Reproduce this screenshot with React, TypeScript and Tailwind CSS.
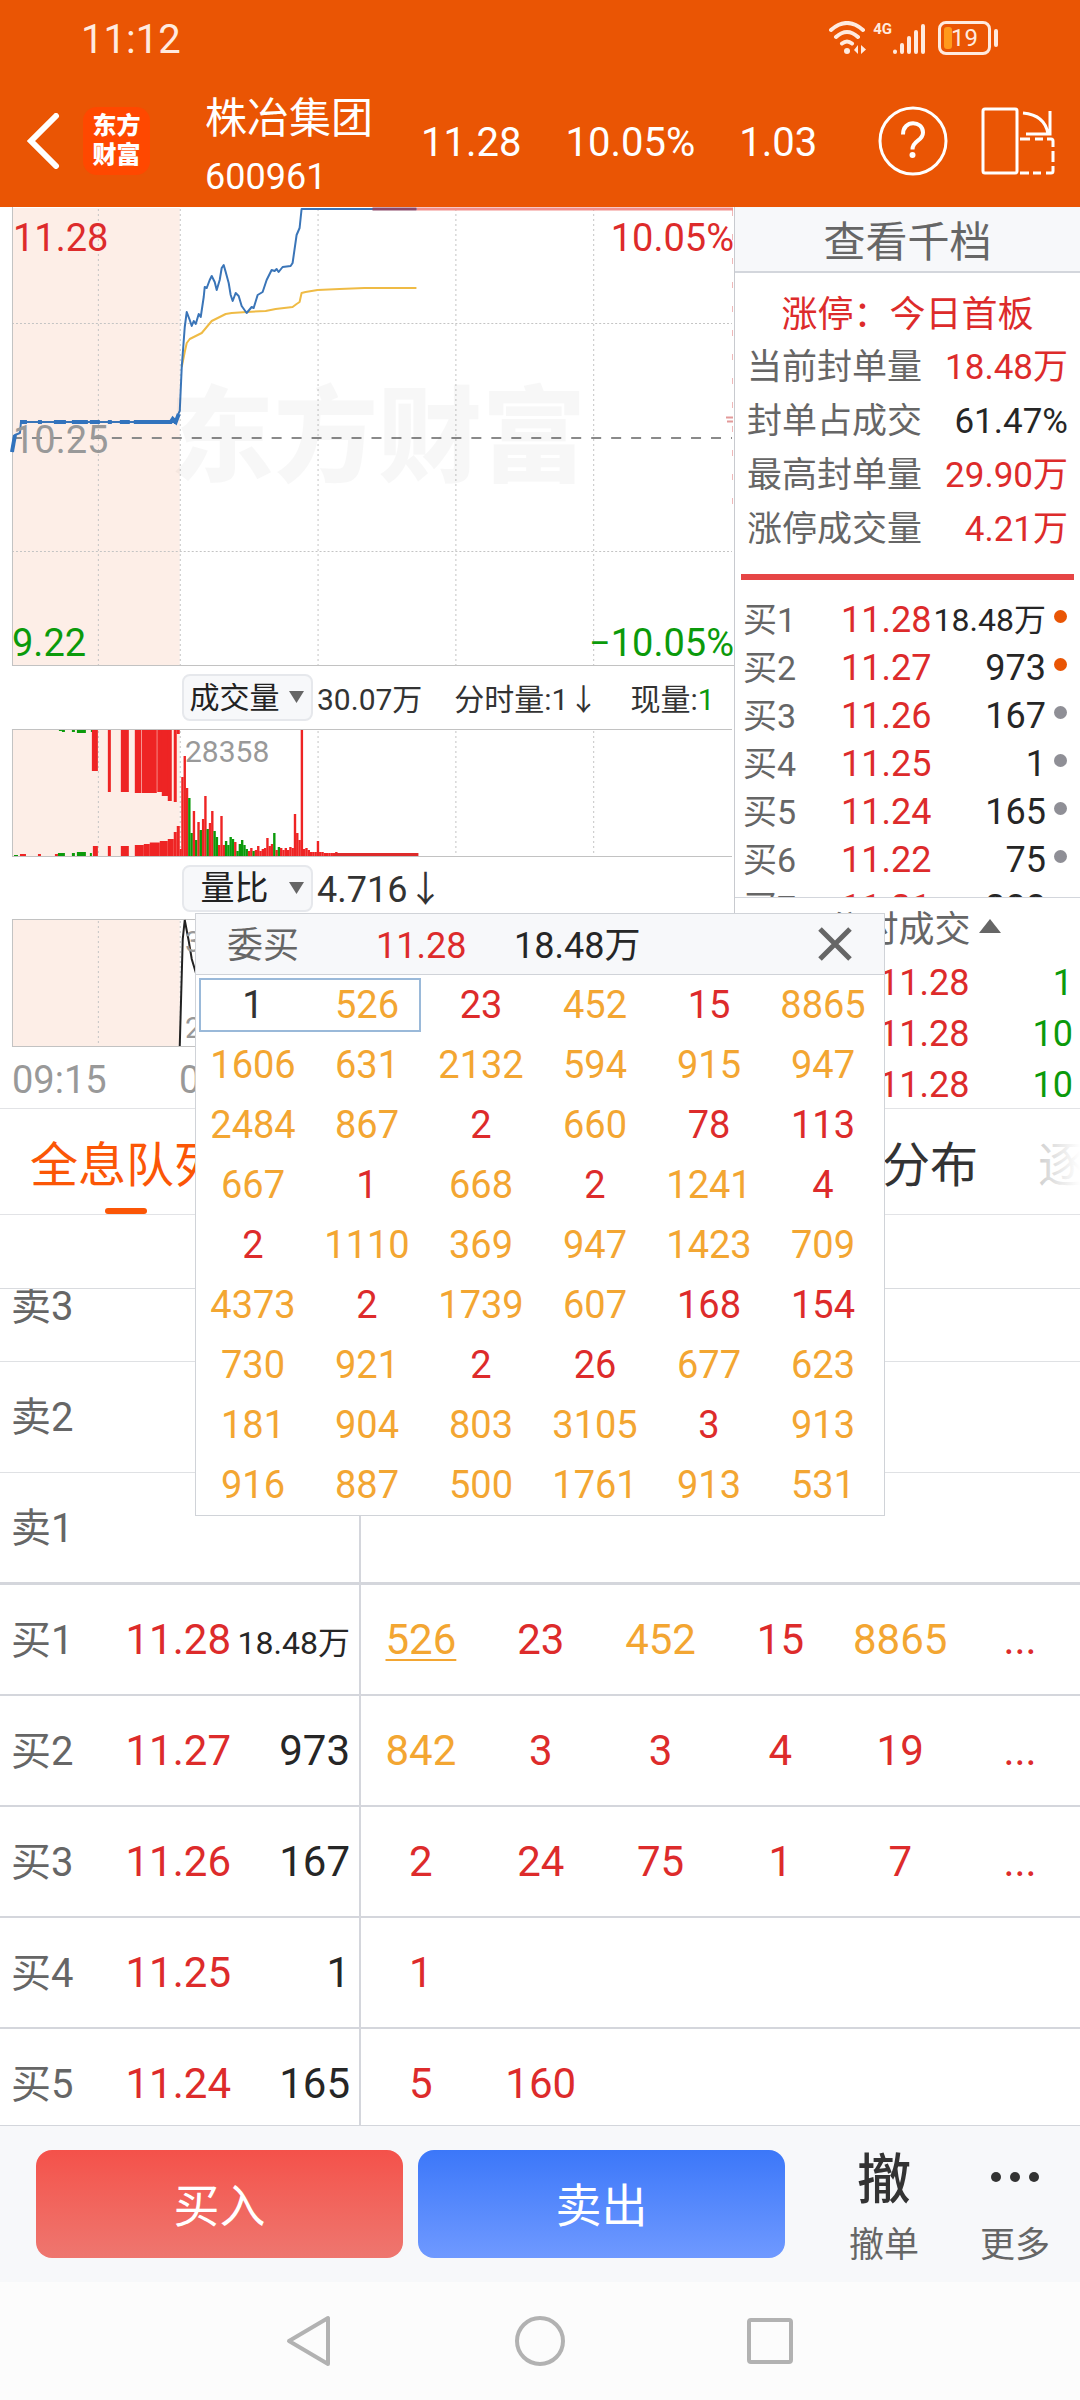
import React from "react";

type Bar = [x: number, width: number, height: number, green?: 1];

const PRICE =
  "12,245 15,228 20,226 21,215 170,215 173,212 175,216 177,211 179,206 180,204 182,160 185,120 187,105 190,113 192,119 194,114 196,117 199,107 201,110 204,90 205,80 207,81 210,73 212,69 215,75 217,83 220,73 222,61 224,58 226,65 229,76 231,88 233,94 236,86 239,89 242,99 247,106 252,100 254,101 258,88 263,85 267,73 272,63 275,64 277,62 279,65 283,60 291,59 293,56 297,28 300,21 302,2 417,2";
const AVERAGE =
  "182,160 185,145 187,136 190,132 196,129 202,126 207,120 212,114 220,110 226,107 232,106 247,105 266,104 276,102 293,100 297,97 300,95 302,86 306,85 318,83 340,82 365,81 417,81";

const TOP_BARS: Bar[] = [
  [12, 3, 1], [38, 3, 1], [59, 3, 2, 1], [62, 3, 3, 1], [72, 3, 3, 1], [77, 9, 4, 1], [91, 2, 3, 1],
  [92, 6, 42], [108, 3, 63], [121, 8, 63], [135, 6.5, 64], [142, 15, 64], [157.5, 5, 63],
  [162, 7, 67], [168, 4, 72], [174, 3, 73], [177, 3, 5],
];

const CALL_BARS: Bar[] = [
  [14, 4, 1, 1], [20, 6, 2], [38, 3, 2], [55, 3, 2], [58, 7, 3, 1], [72, 3, 3, 1], [77, 9, 4, 1],
  [90, 2, 3, 1], [93, 5, 10], [108, 3, 10], [121, 8, 10], [135, 9, 11], [144, 6, 12],
  [150, 10, 13.5], [160, 8, 15], [168, 6, 17], [174, 3, 24], [177, 3, 30], [180, 2, 7],
];

// Minute volumes after the open; negative values are falling minutes.
const MINUTES = [
  79, 100, 68, -58, -23, 45, -16, 34, -26, 37, 60, -27, 33, 45, -25, -19, 11, 40, 11, -15, -11, -19,
  -17, 14, -5, -12, -16, -11, -7, 5, 8, -5, 6, 10, 5, 7, 8, 18, 10, 12, -23, 6, -9, 8, 6, 8, 6, 9, 8,
  42, 23, 16, 126, 7, 8, 6, 4, 4, 4, 15, 4, 4, 3, 3, 3, 3, 3, 4,
];

const GRID_X = [98, 180, 318, 456, 594];

const QUEUE = [
  [526, 23, 452, 15, 8865],
  [1606, 631, 2132, 594, 915, 947],
  [2484, 867, 2, 660, 78, 113],
  [667, 1, 668, 2, 1241, 4],
  [2, 1110, 369, 947, 1423, 709],
  [4373, 2, 1739, 607, 168, 154],
  [730, 921, 2, 26, 677, 623],
  [181, 904, 803, 3105, 3, 913],
  [916, 887, 500, 1761, 913, 531],
];

const LIMIT_STATS = [
  ["当前封单量", "18.48万", true],
  ["封单占成交", "61.47%", false],
  ["最高封单量", "29.90万", true],
  ["涨停成交量", "4.21万", true],
] as const;

const BIDS = [
  ["买1", "11.28", "18.48万", "bg-[#e95504]"],
  ["买2", "11.27", "973", "bg-[#e95504]"],
  ["买3", "11.26", "167", "bg-[#8f8f96]"],
  ["买4", "11.25", "1", "bg-[#8f8f96]"],
  ["买5", "11.24", "165", "bg-[#8f8f96]"],
  ["买6", "11.22", "75", "bg-[#8f8f96]"],
  ["买7", "11.21", "288", "bg-[#f4c9a8]"],
];

const TRADES = [["11.28", "1"], ["11.28", "10"], ["11.28", "10"]];

const BOOK: { name: string; price?: string; volume?: string; orders: number[]; more?: boolean }[] = [
  { name: "卖3", orders: [] },
  { name: "卖2", orders: [] },
  { name: "卖1", orders: [] },
  { name: "买1", price: "11.28", volume: "18.48万", orders: [526, 23, 452, 15, 8865], more: true },
  { name: "买2", price: "11.27", volume: "973", orders: [842, 3, 3, 4, 19], more: true },
  { name: "买3", price: "11.26", volume: "167", orders: [2, 24, 75, 1, 7], more: true },
  { name: "买4", price: "11.25", volume: "1", orders: [1] },
  { name: "买5", price: "11.24", volume: "165", orders: [5, 160] },
];

const orderColor = (n: number) => (n > 170 ? "text-[#f3a632]" : "text-[#dd2b2b]");

function StatusBar() {
  return (
    <div className="flex h-[75px] items-center justify-between pr-[82px] pl-[81px] text-[#ffeadf]">
      <span className="pt-1 text-[40px] leading-none">11:12</span>
      <div className="flex items-center">
        <svg width="38" height="34" viewBox="0 0 38 34" fill="none" stroke="currentColor" strokeWidth="4" strokeLinecap="round">
          <path d="M2 9Q18 -5 34 9M7 16Q18 6 29 16M13 22.500Q18 18.500 23 22.500" />
          <circle cx="18" cy="30" r="3" fill="currentColor" stroke="none" />
          <path d="M29 24v9l-4-4zM32 24v9l5-4.500z" fill="currentColor" stroke="none" />
        </svg>
        <span className="mb-4 ml-[6px] text-[15px] leading-none font-bold">4G</span>
        <svg width="34" height="34" viewBox="0 0 34 34" fill="none" stroke="currentColor" strokeWidth="4" strokeLinecap="round">
          <path d="M3 30.500v.5M10 24v7M17 17v14M24 11v20M31 5v26" />
        </svg>
        <div className="relative ml-3 flex h-[34px] w-[53px] items-center justify-center rounded-[8px] border-3 border-current">
          <span className="absolute top-[3px] left-[3px] h-[22px] w-2 rounded-[3px] bg-[#ff9a1c]" />
          <span className="relative text-[24px] leading-none">19</span>
        </div>
        <span className="ml-[3px] h-[18px] w-1 rounded-full bg-current" />
      </div>
    </div>
  );
}

function Header() {
  return (
    <header className="bg-[#ea5504] text-white">
      <StatusBar />
      <div className="flex h-[132px] items-center pr-[25px] pl-[27px]">
        <button aria-label="返回">
          <svg width="33" height="56" viewBox="0 0 33 56" fill="none" stroke="currentColor" strokeWidth="6" strokeLinecap="round">
            <path d="M29 3L4 28L29 53" />
          </svg>
        </button>
        <div className="ml-[23px] flex h-[68px] w-[67px] flex-col items-center justify-center rounded-[14px] bg-[#ff4800] text-[24px] leading-[29px] font-black">
          <span>东方</span>
          <span>财富</span>
        </div>
        <div className="ml-[55px] pt-3">
          <h1 className="text-[42px] leading-[60px]">株冶集团</h1>
          <p className="text-[36px] leading-[56px]">600961</p>
        </div>
        <div className="mt-1 ml-12 flex gap-11 text-[40px] leading-none">
          <span>11.28</span>
          <span>10.05%</span>
          <span>1.03</span>
        </div>
        <button aria-label="帮助" className="ml-auto">
          <svg width="70" height="70" viewBox="0 0 70 70" fill="none" stroke="currentColor" strokeWidth="3">
            <circle cx="35" cy="35" r="33" />
            <path d="M25 28.500C25 13 45 14.500 45 26.500C45 35.500 34.500 34 34.500 43.500" strokeWidth="4" />
            <circle cx="34.500" cy="49" r="3" fill="currentColor" stroke="none" />
          </svg>
        </button>
        <button aria-label="横屏" className="ml-[33px]">
          <svg width="74" height="68" viewBox="0 0 74 68" fill="none" stroke="currentColor" strokeWidth="3">
            <rect x="2" y="2" width="34" height="64" rx="2" />
            <path d="M42 6Q64 8 67 27M69 4V27H45" />
            <path d="M39 32h10M54 32h8M66 32h4q2 0 2 2v6M72 44v11M72 59v5q0 2-2 2h-5M60 66h-8M48 66h-9" />
          </svg>
        </button>
      </div>
    </header>
  );
}

function Grid({ height }: { height: number }) {
  return (
    <>
      <rect x="12" y="1" width="168" height={height - 1} fill="#fdeee7" />
      {GRID_X.map((x) => (
        <line key={x} x1={x + 0.5} x2={x + 0.5} y1="2" y2={height} stroke="#c4c4c4" strokeDasharray="2 3" />
      ))}
    </>
  );
}

function PriceChart() {
  return (
    <div className="relative text-[38px] leading-none">
      <svg className="block h-[459px] w-full" viewBox="0 0 735 459" preserveAspectRatio="none" fill="none">
        <Grid height={459} />
        <path d="M12 116.500H733M12 344.500H733" stroke="#c4c4c4" strokeDasharray="2 2" />
        <path d="M12 231H733" stroke="#8a8a8a" strokeWidth="2" strokeDasharray="10 10" />
        <path d="M12.500 0V459M12 458.500H735" stroke="#c2c2c2" />
        <path d="M733.500 3V300" stroke="#efb9b9" strokeDasharray="6 18" />
        <path d="M727 210.500H734M728 214.500H734" stroke="#e39a9a" strokeWidth="2" />
        <path d="M417 2H734" stroke="#f28f8b" strokeWidth="3" />
        <polyline points={AVERAGE} stroke="#efbb45" strokeWidth="2" strokeLinejoin="round" />
        <polyline points={PRICE} stroke="#3a75b8" strokeWidth="2" strokeLinejoin="round" />
        <path d="M12 245L15 228" stroke="#3273bd" strokeWidth="4" />
        <path d="M20 215h7M38 215h4M54 215h12M72 215h16M90 215h10M108 215h4M120 215h10M134 215h37l2-3 3 3 3-8" stroke="#3273bd" strokeWidth="4" />
        <path d="M373 2H417" stroke="#8c4868" strokeWidth="3" />
      </svg>
      <span className="absolute top-[180px] left-[170px] text-[104px] font-black text-black/[0.03]">东方财富</span>
      <span className="absolute top-3 left-[13px] text-[#dd2b2b]">11.28</span>
      <span className="absolute top-3 right-0 text-[#dd2b2b]">10.05%</span>
      <span className="absolute top-[214px] left-[13px] text-[#999]">10.25</span>
      <span className="absolute bottom-1 left-[12px] text-[#0b9a0b]">9.22</span>
      <span className="absolute right-0 bottom-1 text-[#0b9a0b]">−10.05%</span>
    </div>
  );
}

function Indicator({ label, options, size }: { label: string; options: string[]; size: string }) {
  return (
    <span className="relative flex h-[47px] w-[131px]">
      <select
        aria-label={label}
        className={`w-full appearance-none rounded-lg border-2 border-[#e6e8ec] bg-[#f7f8fa] pr-[26px] text-center leading-none text-[#222] [text-align-last:center] ${size}`}
      >
        {options.map((o) => (
          <option key={o}>{o}</option>
        ))}
      </select>
      <svg className="pointer-events-none absolute top-[17px] right-[9px]" width="15" height="12" viewBox="0 0 15 12" fill="#666">
        <path d="M0 0H15L7.500 12Z" />
      </svg>
    </span>
  );
}

function Bars({ bars, top }: { bars: Bar[]; top?: boolean }) {
  return (
    <>
      {bars.map(([x, w, h, green], i) => (
        <rect key={i} x={x} y={top ? 0 : 127 - h} width={w} height={h} fill={green ? "#0b9a0b" : "#ee2424"} />
      ))}
    </>
  );
}

function Charts() {
  const minutes: Bar[] = MINUTES.map((v, i) => [181.5 + i * 2.3, 2.4, Math.abs(v), v < 0 ? 1 : undefined]);
  return (
    <section className="min-w-0 flex-1 text-[#333]">
      <PriceChart />
      <div className="flex h-[63px] items-center pl-[182px] text-[30px] leading-none whitespace-nowrap">
        <Indicator label="副图指标一" options={["成交量", "量比"]} size="text-[30px]" />
        <span className="mt-1 ml-1">30.07万</span>
        <span className="mt-1 ml-8">分时量:1↓</span>
        <span className="mt-1 ml-8">
          现量:<span className="text-[#0b9a0b]">1</span>
        </span>
      </div>
      <div className="relative">
        <svg className="block h-[128px] w-full" viewBox="0 0 735 128" preserveAspectRatio="none" fill="none">
          <Grid height={128} />
          <Bars bars={TOP_BARS} top />
          <Bars bars={CALL_BARS} />
          <Bars bars={minutes} />
          <rect x="335" y="124" width="84" height="3" fill="#dd2b2b" />
          <path d="M12.500 0V128M12 .5H733M12 127.500H733" stroke="#c2c2c2" />
        </svg>
        <span className="absolute top-2 left-[185px] text-[30px] leading-none text-[#999]">28358</span>
      </div>
      <div className="flex h-[62px] items-center pl-[182px] text-[36px] leading-none">
        <Indicator label="副图指标二" options={["量比", "成交量"]} size="text-[34px]" />
        <span className="mt-1 ml-1">4.716↓</span>
      </div>
      <div className="relative">
        <svg className="block h-[128px] w-full" viewBox="0 0 735 128" preserveAspectRatio="none" fill="none">
          <Grid height={128} />
          <path d="M12.500 0V128M12 .5H733M12 127.500H733" stroke="#c2c2c2" />
          <path d="M180 127L183 20L185 1L189 22L192 40L198 60" stroke="#222" strokeWidth="2" />
        </svg>
        <span className="absolute top-2 left-[185px] text-[30px] leading-none text-[#999]">3</span>
        <span className="absolute bottom-1 left-[185px] text-[30px] leading-none text-[#999]">2</span>
      </div>
      <div className="flex h-[61px] items-center pt-1 pl-3 text-[38px] leading-none text-[#999]">
        <span className="w-[167px]">09:15</span>
        <span>09:30</span>
      </div>
    </section>
  );
}

function SidePanel() {
  return (
    <aside className="flex w-[346px] flex-col border-l border-[#c8cacf] text-[36px] leading-none">
      <button className="h-[66px] border-b-2 border-[#d3d6dc] bg-[#f7f8fa] pt-2 text-[42px] text-[#666]">查看千档</button>
      <p className="mt-6 text-center leading-[36px] text-[#dd2b2b]">涨停：今日首板</p>
      <dl className="mt-2 px-3 text-[35px] leading-[54px]">
        {LIMIT_STATS.map(([name, value, red]) => (
          <div key={name} className="flex justify-between">
            <dt className="text-[#666]">{name}</dt>
            <dd className={red ? "text-[#dd2b2b]" : "text-[#262626]"}>{value}</dd>
          </div>
        ))}
      </dl>
      <div className="mx-[6px] mt-[17px] h-[6px] bg-[#e64545]" />
      <div className="mt-4 h-[302px] overflow-hidden border-b border-[#d3d6dc] px-2">
        {BIDS.map(([name, price, volume, dot]) => (
          <div key={name} className="flex h-12 items-center">
            <span className="w-[98px] text-[34px] text-[#666]">{name}</span>
            <span className="text-[#dd2b2b]">{price}</span>
            <span className={`flex-1 text-right text-[#262626] ${volume.length > 5 ? "text-[32px]" : ""}`}>{volume}</span>
            <span className={`mr-[5px] mb-2 ml-2 size-[13px] rounded-full ${dot}`} />
          </div>
        ))}
      </div>
      <button className="flex h-[60px] items-center justify-center gap-2 pt-1 pl-3 text-[#666]">
        分时成交
        <svg className="-mt-2" width="22" height="14" viewBox="0 0 22 14" fill="#666">
          <path d="M11 0L22 14H0Z" />
        </svg>
      </button>
      <div className="-mb-[3px] pr-[7px] pl-36 leading-[51px]">
        {TRADES.map(([price, volume], i) => (
          <div key={i} className="flex justify-between">
            <span className="text-[#dd2b2b]">{price}</span>
            <span className="text-[#0b9a0b]">{volume}</span>
          </div>
        ))}
      </div>
    </aside>
  );
}

function Tabs() {
  return (
    <nav className="relative flex h-[107px] shrink-0 gap-[60px] overflow-hidden border-y border-[#e2e3e6] pl-[30px] text-[48px] whitespace-nowrap text-[#333]">
      <button className="relative pt-2 text-[#fb5606]">
        全息队列
        <span className="absolute bottom-0 left-[75px] h-[6px] w-[42px] rounded-full bg-[#fb5606]" />
      </button>
      <button className="ml-auto pt-2">成交分布</button>
      <button className="w-[42px] pt-2 text-left">逐笔</button>
      <span className="pointer-events-none absolute inset-y-0 right-0 w-[90px] bg-linear-to-r from-white/50 to-white" />
    </nav>
  );
}

function OrderBook() {
  return (
    <section className="flex min-h-0 flex-1 flex-col overflow-hidden">
      <div className="h-[74px] shrink-0 border-b border-[#d9dbdf]" />
      <div className="min-h-0 flex-1 overflow-hidden">
        <table className="-mt-[38px] w-full table-fixed border-separate border-spacing-0 text-[42px] leading-none">
          <colgroup>
            <col className="w-[111px]" />
            <col className="w-[120px]" />
            <col className="w-[130px]" />
            <col span={6} />
          </colgroup>
          <tbody>
            {BOOK.map((row) => {
              const line =
                row.name === "卖1"
                  ? "h-[112px] border-b-3 border-[#d4d6dc]"
                  : row.price
                    ? "h-[111px] border-b-2 border-[#d4d6dc]"
                    : "h-[111px] border-b border-[#dfe1e4]";
              return (
                <tr key={row.name}>
                  <th className={`pl-[11px] text-left font-normal text-[#666] ${line}`}>
                    <span className="text-[40px]">{row.name}</span>
                  </th>
                  <td className={`text-right text-[#dd2b2b] ${line}`}>{row.price}</td>
                  <td className={`border-r-2 pr-[9px] text-right whitespace-nowrap text-[#262626] ${line}`}>
                    <span className={row.volume && row.volume.length > 5 ? "text-[32px]" : ""}>{row.volume}</span>
                  </td>
                  {[0, 1, 2, 3, 4].map((i) => (
                    <td key={i} className={`text-center ${line}`}>
                      {row.orders[i] !== undefined && (
                        <span
                          className={`${orderColor(row.orders[i])} ${
                            row.name === "买1" && i === 0 ? "underline decoration-2 underline-offset-[5px]" : ""
                          }`}
                        >
                          {row.orders[i]}
                        </span>
                      )}
                    </td>
                  ))}
                  <td className={`text-center text-[#dd2b2b] ${line}`}>{row.more ? "..." : ""}</td>
                </tr>
              );
            })}
          </tbody>
        </table>
      </div>
    </section>
  );
}

function QueuePopup() {
  return (
    <div role="dialog" aria-label="委买队列" className="absolute inset-x-[195px] top-[913px] border border-[#d0d3d8] bg-white">
      <div className="flex h-[61px] items-center border-b border-[#d0d3d8] bg-[#f7f8fa] pt-1 pr-8 pl-[31px] text-[36px] leading-none">
        <span className="w-[149px] text-[#666]">委买</span>
        <span className="w-[138px] text-[#dd2b2b]">11.28</span>
        <span className="text-[#262626]">18.48万</span>
        <button aria-label="关闭" className="-mt-1 ml-auto">
          <svg width="34" height="34" viewBox="0 0 34 34" fill="none" stroke="#666" strokeWidth="5">
            <path d="M2 2L32 32M32 2L2 32" />
          </svg>
        </button>
      </div>
      <div className="grid grid-cols-6 pr-1 text-center text-[38px] leading-[60px]">
        <button className="relative col-span-2 grid grid-cols-2">
          <span className="absolute inset-[3px] border-2 border-[#9ab9d9]" />
          <span className="text-[#333]">1</span>
          <span className={orderColor(QUEUE[0][0])}>{QUEUE[0][0]}</span>
        </button>
        {QUEUE.flat()
          .slice(1)
          .map((n, i) => (
            <span key={i} className={orderColor(n)}>
              {n}
            </span>
          ))}
      </div>
    </div>
  );
}

function ActionBar() {
  return (
    <div className="flex h-[157px] shrink-0 items-center border-t border-[#d3d6dc] bg-[#f7f8fa] pr-[30px] pl-9">
      <div className="flex flex-1 gap-[15px] text-[46px] text-white">
        <button className="h-[108px] flex-1 rounded-2xl bg-linear-to-b from-[#f4514a] to-[#ee766f] pt-1">买入</button>
        <button className="h-[108px] flex-1 rounded-2xl bg-linear-to-b from-[#3b77f9] to-[#6f99ff] pt-1">卖出</button>
      </div>
      <button className="ml-16 flex flex-col items-center pt-2 text-[35px] leading-none text-[#666]">
        <span className="flex h-[54px] items-center text-[54px] font-medium text-[#333]">撤</span>
        <span className="mt-5">撤单</span>
      </button>
      <button className="ml-[61px] flex flex-col items-center pt-2 text-[35px] leading-none text-[#666]">
        <span className="flex h-[54px] items-center pb-2">
          <svg width="48" height="10" viewBox="0 0 48 10" fill="#333">
            <circle cx="5" cy="5" r="5" />
            <circle cx="24" cy="5" r="5" />
            <circle cx="43" cy="5" r="5" />
          </svg>
        </span>
        <span className="mt-5">更多</span>
      </button>
    </div>
  );
}

function SystemNav() {
  return (
    <div className="flex h-[118px] shrink-0 items-center justify-center gap-[179px] bg-[#fcfcfc]">
      <button aria-label="后退">
        <svg width="50" height="54" viewBox="0 0 50 54" fill="none" stroke="#b2b2b2" strokeWidth="4" strokeLinejoin="round">
          <path d="M43 4V50L4 27Z" />
        </svg>
      </button>
      <button aria-label="主页">
        <svg width="52" height="52" viewBox="0 0 52 52" fill="none" stroke="#b2b2b2" strokeWidth="4">
          <circle cx="26" cy="26" r="23" />
        </svg>
      </button>
      <button aria-label="最近任务">
        <svg width="50" height="50" viewBox="0 0 50 50" fill="none" stroke="#b2b2b2" strokeWidth="4">
          <rect x="4" y="4" width="42" height="42" rx="2" />
        </svg>
      </button>
    </div>
  );
}

export default function App() {
  return (
    <div className="relative flex h-screen flex-col bg-white font-[Roboto,'Noto_Sans_CJK_SC',sans-serif]">
      <Header />
      <div className="flex shrink-0">
        <Charts />
        <SidePanel />
      </div>
      <Tabs />
      <OrderBook />
      <ActionBar />
      <SystemNav />
      <QueuePopup />
    </div>
  );
}
